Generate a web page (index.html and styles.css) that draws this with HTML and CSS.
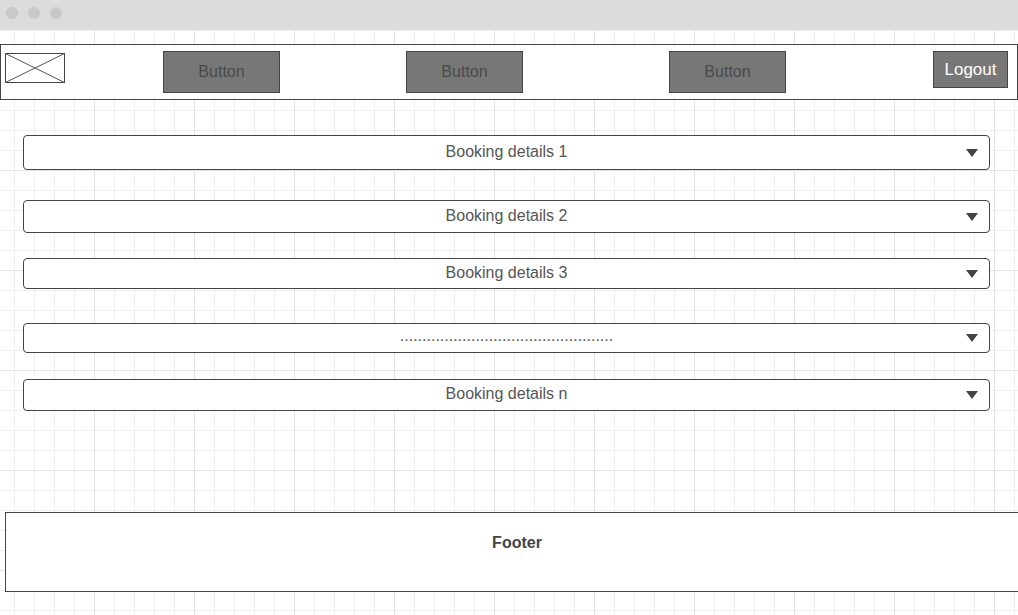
FILE: index.html
```html
<!DOCTYPE html>
<html lang="en">
<head>
<meta charset="utf-8">
<title>Bookings</title>
<link rel="stylesheet" href="styles.css">
</head>
<body>
<div class="titlebar">
  <span class="dot"></span><span class="dot"></span><span class="dot"></span>
</div>
<header class="topnav">
  <svg class="logo" width="60" height="30" viewBox="0 0 60 30">
    <rect x="0.5" y="0.5" width="59" height="29" fill="#fff" stroke="#444" stroke-width="1"/>
    <line x1="0.5" y1="0.5" x2="59.5" y2="29.5" stroke="#555" stroke-width="1"/>
    <line x1="59.5" y1="0.5" x2="0.5" y2="29.5" stroke="#555" stroke-width="1"/>
  </svg>
  <div class="navbtn nb1">Button</div>
  <div class="navbtn nb2">Button</div>
  <div class="navbtn nb3">Button</div>
  <div class="logout">Logout</div>
</header>
<main class="list">
  <div class="row r1"><span class="label">Booking details 1</span><span class="caret"></span></div>
  <div class="row r2"><span class="label">Booking details 2</span><span class="caret"></span></div>
  <div class="row r3"><span class="label">Booking details 3</span><span class="caret"></span></div>
  <div class="row r4"><span class="label dots">................................................</span><span class="caret"></span></div>
  <div class="row r5"><span class="label">Booking details n</span><span class="caret"></span></div>
</main>
<footer class="footer">Footer</footer>
</body>
</html>
```
FILE: styles.css
```css
html, body {
  margin: 0;
  padding: 0;
  overflow: hidden;
}
body {
  width: 1018px;
  height: 615px;
  font-family: "Liberation Sans", Arial, sans-serif;
  background-color: #ffffff;
  background-image:
    linear-gradient(to right, #e3e3e3 1px, transparent 1px),
    linear-gradient(to bottom, #e3e3e3 1px, transparent 1px),
    linear-gradient(to right, #efefef 1px, transparent 1px),
    linear-gradient(to bottom, #efefef 1px, transparent 1px);
  background-size: 100px 100px, 100px 100px, 20px 20px, 20px 20px;
  background-position: 94px 0, 0 70px, 14px 0, 0 10px;
}
.titlebar {
  height: 30px;
  background: #dcdcdc;
  display: flex;
  align-items: center;
  gap: 10px;
  padding-left: 6px;
  box-sizing: border-box;
}
.dot {
  width: 12px;
  height: 12px;
  border-radius: 50%;
  background: #c9c9c9;
  margin-top: -4px;
}
.topnav {
  margin-top: 14px;
  width: 1018px;
  height: 56px;
  box-sizing: border-box;
  border: 1px solid #444;
  background: #fff;
  display: flex;
  align-items: flex-start;
  padding-left: 4px;
}
.logo {
  margin-top: 8px;
  display: block;
}
.navbtn {
  margin-top: 6px;
  width: 117px;
  height: 42px;
  box-sizing: border-box;
  border: 1px solid #444;
  background: #777;
  color: #4a4a4a;
  font-size: 16px;
  display: flex;
  align-items: center;
  justify-content: center;
}
.nb1 { margin-left: 98px; }
.nb2 { margin-left: 126px; }
.nb3 { margin-left: 146px; }
.logout {
  margin-top: 6px;
  margin-left: 147px;
  width: 75px;
  height: 37px;
  box-sizing: border-box;
  border: 1px solid #444;
  background: #777;
  color: #fff;
  font-size: 17px;
  display: flex;
  align-items: center;
  justify-content: center;
}
.list {
  display: flex;
  flex-direction: column;
  padding-left: 23px;
}
.row {
  position: relative;
  width: 967px;
  box-sizing: border-box;
  border: 1px solid #444;
  border-radius: 4px;
  background: #fff;
  display: flex;
  align-items: center;
  justify-content: center;
  color: #555;
  font-size: 16px;
}
.r1 { margin-top: 35px; height: 35px; }
.r2 { margin-top: 30px; height: 33px; }
.r3 { margin-top: 25px; height: 31px; }
.r4 { margin-top: 34px; height: 30px; }
.r5 { margin-top: 26px; height: 32px; }
.label { line-height: 18px; margin-top: -2px; }
.dots { margin-top: -4px; }
.caret {
  position: absolute;
  right: 11px;
  top: 50%;
  margin-top: -4px;
  width: 0;
  height: 0;
  border-left: 6px solid transparent;
  border-right: 6px solid transparent;
  border-top: 8px solid #444;
}
.footer {
  margin-top: 101px;
  margin-left: 5px;
  width: 1024px;
  height: 80px;
  box-sizing: border-box;
  border: 1px solid #444;
  background: #fff;
  text-align: center;
  font-weight: bold;
  font-size: 16px;
  color: #444;
  padding-top: 21px;
  line-height: 18px;
}
```
